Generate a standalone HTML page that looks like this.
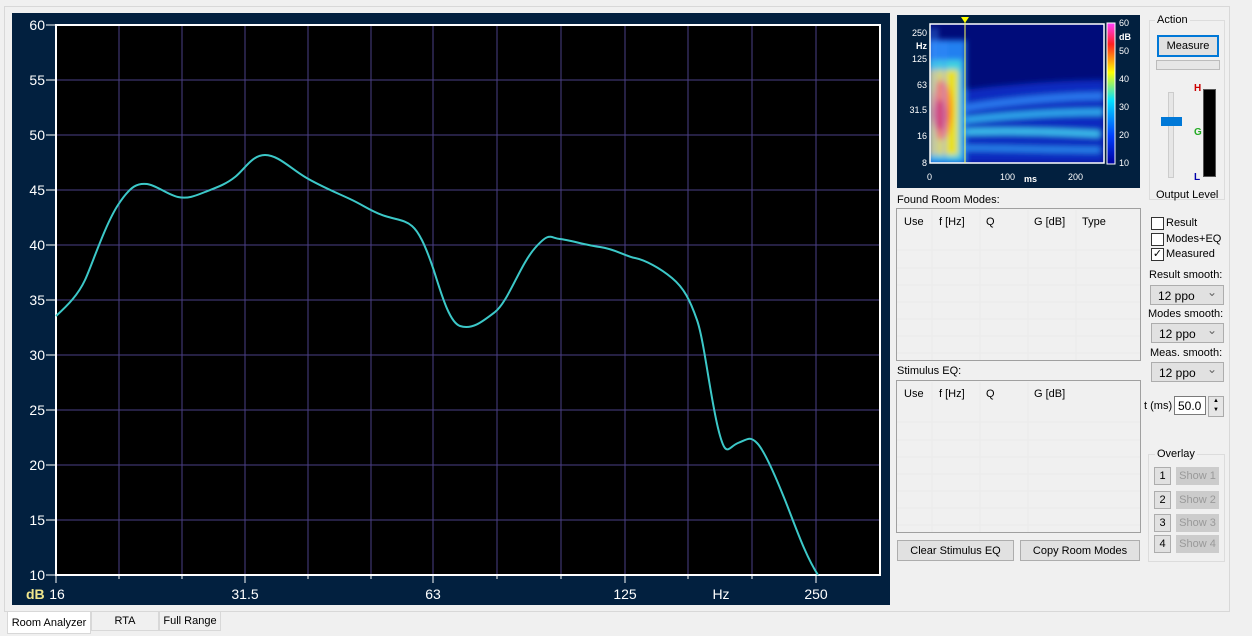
<!DOCTYPE html>
<html><head><style>
body{margin:0;width:1252px;height:636px;background:#f0f0f0;font-family:"Liberation Sans",sans-serif;font-size:11px;position:relative;overflow:hidden}
.a{position:absolute}
.tbl{background:#fff;border:1px solid #a0a0a0}
.btn{position:absolute;background:#e1e1e1;border:1px solid #adadad;text-align:center;box-sizing:border-box}
.cb{position:absolute;width:11px;height:11px;border:1px solid #333;background:#fff}
.sel{position:absolute;background:#e1e1e1;border:1px solid #adadad;box-sizing:border-box;padding:3px 0 0 7px;font-size:12px}
.sel:after{content:"⌄";position:absolute;right:6px;top:-1px;color:#666}
</style></head><body>
<div class="a" style="left:4px;top:6px;width:1224px;height:604px;background:#f0f0f0;border:1px solid #d8d8d8"></div>
<svg class="a" style="left:0;top:0" width="1252" height="636">
<defs>
<filter id="bl" x="-20%" y="-20%" width="140%" height="140%"><feGaussianBlur stdDeviation="3"/></filter>
<clipPath id="cp"><rect x="930" y="24" width="174" height="139"/></clipPath>
<linearGradient id="cbar" x1="0" x2="0" y1="0" y2="1">
<stop offset="0" stop-color="#ff40ff"/><stop offset="0.15" stop-color="#ff2020"/><stop offset="0.35" stop-color="#ffff00"/><stop offset="0.55" stop-color="#00e0ff"/><stop offset="0.8" stop-color="#0040ff"/><stop offset="1" stop-color="#0000a0"/>
</linearGradient>
</defs>
<rect x="12" y="13" width="878" height="592" fill="#02203f"/>
<rect x="56" y="25" width="824" height="550" fill="#000"/>
<g stroke="#4a3f86" stroke-width="1">
<path d="M119 25V575M182 25V575M245 25V575M308 25V575M371 25V575M433 25V575M497 25V575M561 25V575M625 25V575M688 25V575M752 25V575M816 25V575"/>
<path d="M56 80H880M56 135H880M56 190H880M56 245H880M56 300H880M56 355H880M56 410H880M56 465H880M56 520H880"/>
</g>
<rect x="56" y="25" width="824" height="550" fill="none" stroke="#fff" stroke-width="2"/>
<g stroke="#fff" stroke-width="1">
<path d="M46 25H56M46 80H56M46 135H56M46 190H56M46 245H56M46 300H56M46 355H56M46 410H56M46 465H56M46 520H56M46 575H56"/>
<path d="M56 575v8M119 575v4M182 575v4M245 575v8M308 575v4M371 575v4M433 575v8M497 575v4M561 575v4M625 575v8M688 575v4M752 575v4M816 575v8"/>
</g>
<g fill="#fff" font-size="14" text-anchor="end">
<text x="45" y="30">60</text><text x="45" y="85">55</text><text x="45" y="140">50</text><text x="45" y="195">45</text><text x="45" y="250">40</text><text x="45" y="305">35</text><text x="45" y="360">30</text><text x="45" y="415">25</text><text x="45" y="470">20</text><text x="45" y="525">15</text><text x="45" y="580">10</text>
</g>
<g fill="#fff" font-size="14" text-anchor="middle">
<text x="57" y="599">16</text><text x="245" y="599">31.5</text><text x="433" y="599">63</text><text x="625" y="599">125</text><text x="721" y="599">Hz</text><text x="816" y="599">250</text>
</g>
<text x="26" y="599" fill="#f0e68c" font-size="14" font-weight="bold">dB</text>
<path d="M56 316 C68 305,78 295,85 280 S105 225,118 205 S138 183,147 184 S168 195,178 197 S195 196,205 192 S225 185,235 177 S252 155,265 155 S290 168,305 177 S335 192,350 199 S372 212,385 216 S405 220,412 226 S425 245,432 265 S448 322,460 326 S482 322,495 312 S520 265,535 248 S550 238,560 239 S585 245,600 247 S625 256,635 258 S660 268,672 278 S690 300,697 320 S710 395,718 428 S728 447,738 443 S750 436,757 443 S775 475,785 500 S805 555,818 575" fill="none" stroke="#3cc8c8" stroke-width="2"/>
<!-- spectrogram -->
<rect x="897" y="15" width="243" height="173" fill="#02203f"/>
<rect x="930" y="24" width="174" height="139" fill="#000c7a"/>
<g clip-path="url(#cp)" filter="url(#bl)">
<path d="M965 90 C1000 85,1060 80,1104 80 L1104 163 L965 163Z" fill="#0a2cc0"/>
<path d="M965 108 C1000 102,1060 96,1104 96" stroke="#2a7cf0" stroke-width="7" fill="none"/>
<path d="M965 120 C1010 115,1060 112,1104 112" stroke="#30b0f0" stroke-width="6" fill="none"/>
<path d="M965 132 C1010 130,1060 132,1100 134" stroke="#40c8f0" stroke-width="6" fill="none"/>
<path d="M965 148 C1000 148,1060 150,1100 150" stroke="#2a8cf0" stroke-width="5" fill="none"/>
<rect x="928" y="40" width="38" height="125" fill="#2080f0"/>
<rect x="928" y="60" width="34" height="100" fill="#40d0e0"/>
<rect x="928" y="70" width="30" height="85" fill="#e8e020"/>
<ellipse cx="942" cy="110" rx="10" ry="30" fill="#ff8010"/>
<ellipse cx="940" cy="115" rx="7" ry="15" fill="#e82010"/>
<path d="M930 28V162M936 28V160M944 40V160" stroke="#4090ff" stroke-width="2"/>
</g>
<rect x="930" y="24" width="174" height="139" fill="none" stroke="#fff" stroke-width="1.5"/>
<line x1="965" y1="22" x2="965" y2="163" stroke="#ffff60"/>
<path d="M961 17h8l-4 6z" fill="#ffff00"/>
<rect x="1107" y="23" width="8" height="141" fill="url(#cbar)" stroke="#fff"/>
<g fill="#fff" font-size="9">
<text x="1119" y="26">60</text><text x="1119" y="40" font-weight="bold">dB</text><text x="1119" y="54">50</text><text x="1119" y="82">40</text><text x="1119" y="110">30</text><text x="1119" y="138">20</text><text x="1119" y="166">10</text>
<g text-anchor="end"><text x="927" y="36">250</text><text x="927" y="49" font-weight="bold">Hz</text><text x="927" y="62">125</text><text x="927" y="88">63</text><text x="927" y="113">31.5</text><text x="927" y="139">16</text><text x="927" y="166">8</text></g>
<text x="927" y="180">0</text><text x="1000" y="180">100</text><text x="1024" y="182" font-weight="bold">ms</text><text x="1068" y="180">200</text>
</g>
<g stroke="#eaeaea">
<path d="M932 210V360M980 210V360M1028 210V360M1076 210V360M897 250H1140M897 268H1140M897 285H1140M897 302H1140M897 319H1140M897 336H1140M897 353H1140"/>
<path d="M932 382V532M980 382V532M1028 382V532M897 422H1140M897 440H1140M897 457H1140M897 474H1140M897 491H1140M897 508H1140M897 525H1140"/>
</g>
</svg>
<div class="a tbl" style="left:896px;top:208px;width:243px;height:151px;background:none"></div>
<div class="a tbl" style="left:896px;top:380px;width:243px;height:151px;background:none"></div>
<div class="a" style="left:897px;top:194px">Found Room Modes:</div>
<div class="a" style="left:897px;top:365px">Stimulus EQ:</div>
<div class="a" style="left:904px;top:216px">Use</div><div class="a" style="left:939px;top:216px">f [Hz]</div><div class="a" style="left:986px;top:216px">Q</div><div class="a" style="left:1034px;top:216px">G [dB]</div><div class="a" style="left:1082px;top:216px">Type</div>
<div class="a" style="left:904px;top:388px">Use</div><div class="a" style="left:939px;top:388px">f [Hz]</div><div class="a" style="left:986px;top:388px">Q</div><div class="a" style="left:1034px;top:388px">G [dB]</div>
<div class="btn" style="left:897px;top:540px;width:117px;height:21px;padding-top:4px">Clear Stimulus EQ</div>
<div class="btn" style="left:1020px;top:540px;width:120px;height:21px;padding-top:4px">Copy Room Modes</div>
<div class="a" style="left:1149px;top:20px;width:74px;height:178px;border:1px solid #dcdcdc"></div>
<div class="a" style="left:1155px;top:14px;background:#f0f0f0;padding:0 2px">Action</div>
<div class="btn" style="left:1157px;top:35px;width:62px;height:22px;border:2px solid #0078d7;padding-top:3px">Measure</div>
<div class="a" style="left:1156px;top:60px;width:62px;height:8px;background:#e6e6e6;border:1px solid #bcbcbc"></div>
<div class="a" style="left:1168px;top:92px;width:4px;height:84px;background:#e6e6e6;border:1px solid #ccc"></div>
<div class="a" style="left:1161px;top:117px;width:21px;height:9px;background:#0078d7"></div>
<div class="a" style="left:1203px;top:89px;width:11px;height:86px;background:#000;border:1px solid #555"></div>
<div class="a" style="left:1194px;top:83px;color:#c00;font-weight:bold;font-size:10px">H</div>
<div class="a" style="left:1194px;top:127px;color:#2a2;font-weight:bold;font-size:10px">G</div>
<div class="a" style="left:1194px;top:172px;color:#00a;font-weight:bold;font-size:10px">L</div>
<div class="a" style="left:1156px;top:189px">Output Level</div>
<div class="cb" style="left:1151px;top:217px"></div><div class="a" style="left:1166px;top:217px">Result</div>
<div class="cb" style="left:1151px;top:233px"></div><div class="a" style="left:1166px;top:233px">Modes+EQ</div>
<div class="cb" style="left:1151px;top:248px;font-size:11px;line-height:10px;text-align:center">✓</div><div class="a" style="left:1166px;top:248px">Measured</div>
<div class="a" style="left:1149px;top:269px">Result smooth:</div>
<div class="sel" style="left:1150px;top:285px;width:74px;height:20px">12 ppo</div>
<div class="a" style="left:1148px;top:308px">Modes smooth:</div>
<div class="sel" style="left:1151px;top:323px;width:73px;height:20px">12 ppo</div>
<div class="a" style="left:1150px;top:347px">Meas. smooth:</div>
<div class="sel" style="left:1151px;top:362px;width:73px;height:20px">12 ppo</div>
<div class="a" style="left:1144px;top:400px">t (ms)</div>
<div class="a" style="left:1174px;top:396px;width:32px;height:19px;background:#fff;border:1px solid #7a7a7a;padding:2px 0 0 3px;box-sizing:border-box;font-size:12px">50.0</div>
<div class="a" style="left:1208px;top:396px;width:14px;height:19px;background:#e6e6e6;border:1px solid #aaa;font-size:6px;text-align:center;line-height:9px">▲<br>▼</div>
<div class="a" style="left:1148px;top:454px;width:75px;height:106px;border:1px solid #dcdcdc"></div>
<div class="a" style="left:1155px;top:448px;background:#f0f0f0;padding:0 2px">Overlay</div>
<div class="btn" style="left:1154px;top:467px;width:17px;height:18px;padding-top:2px">1</div><div class="btn" style="left:1176px;top:467px;width:43px;height:18px;padding-top:2px;background:#ccc;color:#999;border-color:#ccc">Show 1</div>
<div class="btn" style="left:1154px;top:491px;width:17px;height:18px;padding-top:2px">2</div><div class="btn" style="left:1176px;top:491px;width:43px;height:18px;padding-top:2px;background:#ccc;color:#999;border-color:#ccc">Show 2</div>
<div class="btn" style="left:1154px;top:514px;width:17px;height:18px;padding-top:2px">3</div><div class="btn" style="left:1176px;top:514px;width:43px;height:18px;padding-top:2px;background:#ccc;color:#999;border-color:#ccc">Show 3</div>
<div class="btn" style="left:1154px;top:535px;width:17px;height:18px;padding-top:2px">4</div><div class="btn" style="left:1176px;top:535px;width:43px;height:18px;padding-top:2px;background:#ccc;color:#999;border-color:#ccc">Show 4</div>
<div class="a" style="left:7px;top:612px;width:84px;height:22px;background:#fff;border:1px solid #d8d8d8;border-top:none;text-align:center;padding-top:5px;box-sizing:border-box">Room Analyzer</div>
<div class="a" style="left:91px;top:612px;width:68px;height:19px;border:1px solid #d8d8d8;border-top:none;text-align:center;padding-top:3px;box-sizing:border-box">RTA</div>
<div class="a" style="left:159px;top:612px;width:62px;height:19px;border:1px solid #d8d8d8;border-top:none;text-align:center;padding-top:3px;box-sizing:border-box">Full Range</div>
</body></html>
